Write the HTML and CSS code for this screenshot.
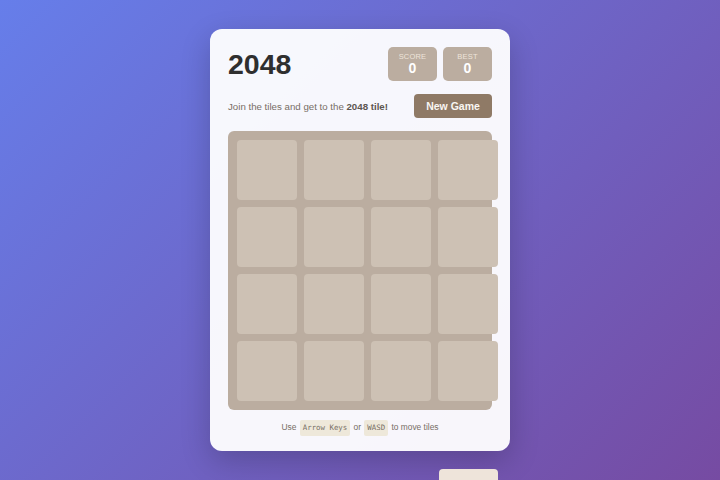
FILE: index.html
```html
<!DOCTYPE html>
<html lang="en">
<head>
<meta charset="utf-8">
<title>2048</title>
<link rel="stylesheet" href="styles.css">
</head>
<body>
<div class="card">
  <div class="header">
    <h1 class="title">2048</h1>
    <div class="scores">
      <div class="score-box"><div class="score-label">SCORE</div><div class="score-value">0</div></div>
      <div class="score-box"><div class="score-label">BEST</div><div class="score-value">0</div></div>
    </div>
  </div>
  <div class="intro">
    <p class="intro-text">Join the tiles and get to the <strong>2048 tile!</strong></p>
    <button class="new-game">New Game</button>
  </div>
  <div class="grid">
    <div class="cell"></div><div class="cell"></div><div class="cell"></div><div class="cell"></div>
    <div class="cell"></div><div class="cell"></div><div class="cell"></div><div class="cell"></div>
    <div class="cell"></div><div class="cell"></div><div class="cell"></div><div class="cell"></div>
    <div class="cell"></div><div class="cell"></div><div class="cell"></div><div class="cell"></div>
  </div>
  <p class="help">Use <kbd class="key">Arrow Keys</kbd> or <kbd class="key">WASD</kbd> to move tiles</p>
</div>
<div class="stray-tile"></div>
</body>
</html>
```

FILE: styles.css
```css
* { box-sizing: border-box; }
html, body { margin: 0; padding: 0; }
body {
  width: 720px;
  height: 480px;
  overflow: hidden;
  position: relative;
  display: flex;
  align-items: center;
  justify-content: center;
  background: linear-gradient(135deg, #667eea 0%, #764ba2 100%);
  font-family: "Liberation Sans", Arial, sans-serif;
}
.card {
  width: 300px;
  height: 422px;
  padding: 18px;
  background: rgba(255, 255, 255, 0.95);
  border-radius: 12px;
  box-shadow: 0 10px 30px rgba(0, 0, 0, 0.2);
}
.header {
  display: flex;
  justify-content: space-between;
  align-items: center;
  height: 34px;
}
.title {
  margin: 0;
  font-size: 28.5px;
  font-weight: bold;
  color: #2f2f2f;
  line-height: 34px;
}
.scores { display: flex; gap: 6px; }
.score-box {
  width: 49px;
  height: 34px;
  background: #bbada0;
  border-radius: 5px;
  color: #fff;
  text-align: center;
  padding-top: 6px;
}
.score-label {
  font-size: 7.5px;
  line-height: 8px;
  color: #eee4da;
  letter-spacing: 0.2px;
}
.score-value {
  font-size: 14px;
  font-weight: bold;
  line-height: 15px;
}
.intro {
  display: flex;
  justify-content: space-between;
  align-items: center;
  margin-top: 13px;
  height: 24px;
}
.intro-text {
  margin: 0;
  font-size: 9.7px;
  color: #776e65;
}
.intro-text strong { color: #5d5650; }
.new-game {
  width: 78px;
  height: 24px;
  border: none;
  border-radius: 4px;
  background: #8f7a66;
  color: #f9f6f2;
  font-family: "Liberation Sans", Arial, sans-serif;
  font-weight: bold;
  font-size: 10.5px;
  padding: 0;
}
.grid {
  margin-top: 13px;
  width: 264px;
  display: grid;
  grid-template-columns: repeat(4, 60px);
  grid-auto-rows: 60px;
  gap: 7px;
  padding: 9px;
  background: #bbada0;
  border-radius: 6px;
}
.cell {
  background: #cdc1b4;
  border-radius: 4px;
}
.help {
  margin: 9px 0 0;
  text-align: center;
  font-size: 8.4px;
  color: #776e65;
  line-height: 16px;
}
.key {
  display: inline-block;
  font-family: "DejaVu Sans Mono", monospace;
  font-size: 7.4px;
  line-height: 16px;
  padding: 0 3px;
  background: #eee8da;
  border-radius: 2px;
  color: #776e65;
  margin: 0 1px;
}
.stray-tile {
  position: absolute;
  left: 439px;
  top: 469px;
  width: 59px;
  height: 60px;
  background: #eee4da;
  border-radius: 4px;
}
```
